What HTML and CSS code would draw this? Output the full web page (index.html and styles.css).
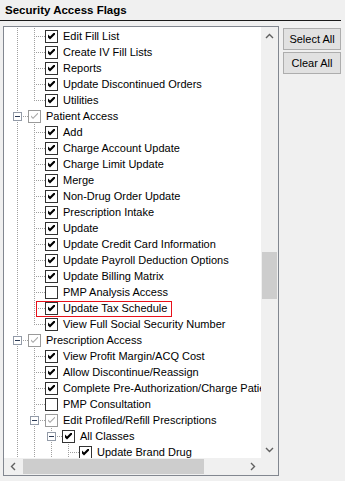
FILE: index.html
```html
<!DOCTYPE html>
<html lang="en">
<head>
    <meta charset="UTF-8">
    <meta name="viewport" content="width=device-width, initial-scale=1.0">
    <title>Security Access Flags</title>
    <link rel="stylesheet" href="styles.css">
</head>
<body>
    <div class="flags">
        <div class="title">Security Access Flags</div>

        <div class="main">
            <div class="tree-box">
                <div class="tree">
                    <div class="row"><span class="g pipe"></span><span class="g tee"></span><span class="cb on"></span><span class="label">Edit Fill List</span></div>
                    <div class="row"><span class="g pipe"></span><span class="g tee"></span><span class="cb on"></span><span class="label">Create IV Fill Lists</span></div>
                    <div class="row"><span class="g pipe"></span><span class="g tee"></span><span class="cb on"></span><span class="label">Reports</span></div>
                    <div class="row"><span class="g pipe"></span><span class="g tee"></span><span class="cb on"></span><span class="label">Update Discontinued Orders</span></div>
                    <div class="row"><span class="g pipe"></span><span class="g last"></span><span class="cb on"></span><span class="label">Utilities</span></div>

                    <!-- Patient Access -->
                    <div class="row"><span class="g tee"><span class="exp"></span></span><span class="cb part"></span><span class="label">Patient Access</span></div>
                    <div class="row"><span class="g pipe"></span><span class="g tee"></span><span class="cb on"></span><span class="label">Add</span></div>
                    <div class="row"><span class="g pipe"></span><span class="g tee"></span><span class="cb on"></span><span class="label">Charge Account Update</span></div>
                    <div class="row"><span class="g pipe"></span><span class="g tee"></span><span class="cb on"></span><span class="label">Charge Limit Update</span></div>
                    <div class="row"><span class="g pipe"></span><span class="g tee"></span><span class="cb on"></span><span class="label">Merge</span></div>
                    <div class="row"><span class="g pipe"></span><span class="g tee"></span><span class="cb on"></span><span class="label">Non-Drug Order Update</span></div>
                    <div class="row"><span class="g pipe"></span><span class="g tee"></span><span class="cb on"></span><span class="label">Prescription Intake</span></div>
                    <div class="row"><span class="g pipe"></span><span class="g tee"></span><span class="cb on"></span><span class="label">Update</span></div>
                    <div class="row"><span class="g pipe"></span><span class="g tee"></span><span class="cb on"></span><span class="label">Update Credit Card Information</span></div>
                    <div class="row"><span class="g pipe"></span><span class="g tee"></span><span class="cb on"></span><span class="label">Update Payroll Deduction Options</span></div>
                    <div class="row"><span class="g pipe"></span><span class="g tee"></span><span class="cb on"></span><span class="label">Update Billing Matrix</span></div>
                    <div class="row"><span class="g pipe"></span><span class="g tee"></span><span class="cb"></span><span class="label">PMP Analysis Access</span></div>
                    <div class="row"><span class="g pipe"></span><span class="g tee"></span><span class="cb on"></span><span class="label">Update Tax Schedule</span><span class="mark"></span></div>
                    <div class="row"><span class="g pipe"></span><span class="g last"></span><span class="cb on"></span><span class="label">View Full Social Security Number</span></div>

                    <!-- Prescription Access -->
                    <div class="row"><span class="g tee"><span class="exp"></span></span><span class="cb part"></span><span class="label">Prescription Access</span></div>
                    <div class="row"><span class="g pipe"></span><span class="g tee"></span><span class="cb on"></span><span class="label">View Profit Margin/ACQ Cost</span></div>
                    <div class="row"><span class="g pipe"></span><span class="g tee"></span><span class="cb on"></span><span class="label">Allow Discontinue/Reassign</span></div>
                    <div class="row"><span class="g pipe"></span><span class="g tee"></span><span class="cb on"></span><span class="label">Complete Pre-Authorization/Charge Patient</span></div>
                    <div class="row"><span class="g pipe"></span><span class="g tee"></span><span class="cb"></span><span class="label">PMP Consultation</span></div>
                    <div class="row"><span class="g pipe"></span><span class="g tee"><span class="exp"></span></span><span class="cb part"></span><span class="label">Edit Profiled/Refill Prescriptions</span></div>
                    <div class="row"><span class="g pipe"></span><span class="g pipe"></span><span class="g tee"><span class="exp"></span></span><span class="cb on"></span><span class="label">All Classes</span></div>
                    <div class="row"><span class="g pipe"></span><span class="g pipe"></span><span class="g pipe"></span><span class="g tee"></span><span class="cb on"></span><span class="label">Update Brand Drug</span></div>
                </div>

                <div class="vscroll">
                    <span class="arrow">
                        <svg width="9" height="6" viewBox="0 0 9 6"><polyline points="1,5 4.5,1.5 8,5" fill="none" stroke="#606060" stroke-width="1.4"/></svg>
                    </span>
                    <div class="track"><div class="vthumb"></div></div>
                    <span class="arrow">
                        <svg width="9" height="6" viewBox="0 0 9 6"><polyline points="1,1 4.5,4.5 8,1" fill="none" stroke="#606060" stroke-width="1.4"/></svg>
                    </span>
                </div>

                <div class="hscroll">
                    <span class="arrow">
                        <svg width="6" height="9" viewBox="0 0 6 9"><polyline points="5,1 1.5,4.5 5,8" fill="none" stroke="#606060" stroke-width="1.4"/></svg>
                    </span>
                    <div class="track"><div class="hthumb"></div></div>
                    <span class="arrow">
                        <svg width="6" height="9" viewBox="0 0 6 9"><polyline points="1,1 4.5,4.5 1,8" fill="none" stroke="#606060" stroke-width="1.4"/></svg>
                    </span>
                </div>

                <div class="corner"></div>
            </div>

            <div class="buttons">
                <button type="button">Select All</button>
                <button type="button">Clear All</button>
            </div>
        </div>
    </div>
</body>
</html>
```

FILE: styles.css
```css
body {
    margin: 0;
    background-color: #f0f0f0;
    font-family: "Liberation Sans", Arial, sans-serif;
    font-size: 11px;
    color: #000;
}
.flags {
    width: 345px;
    height: 481px;
}
.title {
    box-sizing: border-box;
    width: 341px;
    height: 21px;
    padding: 3px 0 0 5px;
    border-bottom: 1px solid #1a1a1a;
    font-weight: bold;
    font-size: 11.5px;
    line-height: 14px;
}
.main {
    display: flex;
    align-items: flex-start;
    margin-top: 5px;
    padding-left: 3px;
}

/* tree view with its scroll bars */
.tree-box {
    display: grid;
    grid-template-columns: 257px 17px;
    grid-template-rows: 431px 17px;
    width: 274px;
    height: 448px;
    border: 1px solid #828790;
    background-color: #fff;
}
.tree {
    overflow: hidden;
    padding-top: 1px;
}
.row {
    position: relative;
    display: flex;
    align-items: center;
    height: 16px;
    padding-left: 5px;
    white-space: nowrap;
}
.g {
    position: relative;
    flex: none;
    width: 17px;
    height: 16px;
}
.g::before, .g::after {
    content: "";
    position: absolute;
}
.pipe::before, .tee::before, .last::before {
    left: 8px;
    top: 0;
    width: 1px;
    height: 16px;
    background: repeating-linear-gradient(to bottom, #a0a0a0 0 1px, transparent 1px 2px);
}
.last::before {
    height: 9px;
}
.tee::after, .last::after {
    left: 9px;
    top: 8px;
    width: 10px;
    height: 1px;
    background: repeating-linear-gradient(to right, transparent 0 1px, #a0a0a0 1px 2px);
}
.exp {
    position: absolute;
    z-index: 1;
    left: 4px;
    top: 4px;
    box-sizing: border-box;
    width: 9px;
    height: 9px;
    border: 1px solid #939ba8;
    background-color: #fff;
}
.exp::after {
    content: "";
    position: absolute;
    left: 1px;
    top: 3px;
    width: 5px;
    height: 1px;
    background-color: #2b3a55;
}

.cb {
    position: relative;
    flex: none;
    box-sizing: border-box;
    width: 13px;
    height: 13px;
    margin-left: 2px;
    border: 1px solid #333;
    background-color: #fff;
}
.cb.on::after, .cb.part::after {
    content: "";
    position: absolute;
    left: 2px;
    top: 2px;
    width: 7px;
    height: 7px;
    background-color: #000;
    clip-path: polygon(0 2px, 2px 4px, 6px 0, 7px 0, 7px 2px, 2px 7px, 0 5px);
}
.cb.part {
    border-color: #9a9a9a;
}
.cb.part::after {
    background-color: #a8a8a8;
    clip-path: polygon(0 3px, 2px 5px, 7px 0, 7px 1.5px, 2px 6.5px, 0 4.5px);
}
.label {
    margin-left: 5px;
    line-height: 16px;
}
.mark {
    position: absolute;
    left: 32px;
    top: 1px;
    box-sizing: border-box;
    width: 136px;
    height: 16px;
    border: 1px solid #e8101a;
}

.vscroll {
    display: flex;
    flex-direction: column;
    background-color: #f0f0f0;
}
.hscroll {
    display: flex;
    background-color: #f0f0f0;
}
.arrow {
    flex: none;
    display: flex;
    align-items: center;
    justify-content: center;
    width: 17px;
    height: 17px;
}
.track {
    flex: 1;
}
.vthumb {
    height: 47px;
    margin: 208px 1px 0;
    background-color: #cdcdcd;
}
.hthumb {
    width: 181px;
    height: 15px;
    margin: 1px 0 0 2px;
    background-color: #cdcdcd;
}
.corner {
    background-color: #f0f0f0;
}

.buttons {
    display: flex;
    flex-direction: column;
    gap: 2px;
    margin: 2px 0 0 4px;
}
button {
    width: 58px;
    height: 22px;
    padding: 0;
    font-family: "Liberation Sans", Arial, sans-serif;
    font-size: 11px;
    color: #000;
    background-color: #e1e1e1;
    border: 1px solid #adadad;
}
```
